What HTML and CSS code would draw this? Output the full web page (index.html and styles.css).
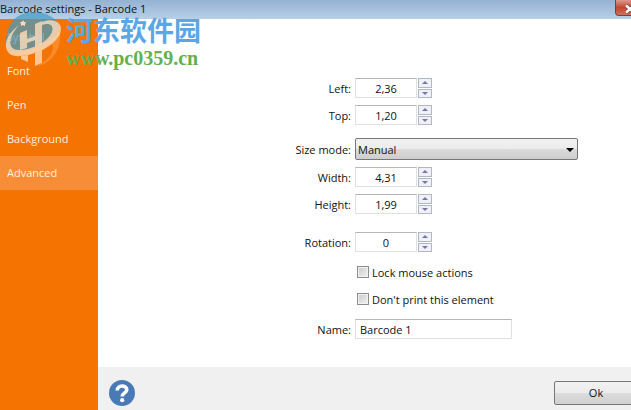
FILE: index.html
```html
<!DOCTYPE html>
<html lang="en">
<head>
    <meta charset="UTF-8">
    <meta name="viewport" content="width=device-width, initial-scale=1.0">
    <title>Barcode settings - Barcode 1</title>
    <link rel="stylesheet" href="styles.css">
</head>
<body>
    <header class="titlebar">
        <span>Barcode settings - Barcode 1</span>
        <button class="close-button" aria-label="Close">
            <svg width="12" height="10" viewBox="0 0 12 10">
                <path d="M2 1.5L10 8.5M10 1.5L2 8.5" stroke="#6b4a50" stroke-width="4"/>
                <path d="M2 1.5L10 8.5M10 1.5L2 8.5" stroke="#fff" stroke-width="2.4"/>
            </svg>
        </button>
    </header>

    <div class="window">
        <!-- Sections -->
        <nav class="sidebar">
            <a href="#symbol">Symbol</a>
            <a href="#font">Font</a>
            <a href="#pen">Pen</a>
            <a href="#background">Background</a>
            <a href="#advanced" class="active">Advanced</a>
        </nav>

        <main class="content">
            <form class="settings" id="settings">
                <div class="row">
                    <label for="left">Left:</label>
                    <div class="spinner">
                        <input type="text" id="left" value="2,36">
                        <div class="steps">
                            <button type="button" class="up" aria-label="Increase left"></button>
                            <button type="button" class="down" aria-label="Decrease left"></button>
                        </div>
                    </div>
                </div>
                <div class="row">
                    <label for="top">Top:</label>
                    <div class="spinner">
                        <input type="text" id="top" value="1,20">
                        <div class="steps">
                            <button type="button" class="up" aria-label="Increase top"></button>
                            <button type="button" class="down" aria-label="Decrease top"></button>
                        </div>
                    </div>
                </div>
                <div class="row row-select">
                    <label for="sizeMode">Size mode:</label>
                    <div class="select-box">
                        <select id="sizeMode">
                            <option>Manual</option>
                        </select>
                    </div>
                </div>
                <div class="row">
                    <label for="width">Width:</label>
                    <div class="spinner">
                        <input type="text" id="width" value="4,31">
                        <div class="steps">
                            <button type="button" class="up" aria-label="Increase width"></button>
                            <button type="button" class="down" aria-label="Decrease width"></button>
                        </div>
                    </div>
                </div>
                <div class="row">
                    <label for="height">Height:</label>
                    <div class="spinner">
                        <input type="text" id="height" value="1,99">
                        <div class="steps">
                            <button type="button" class="up" aria-label="Increase height"></button>
                            <button type="button" class="down" aria-label="Decrease height"></button>
                        </div>
                    </div>
                </div>
                <div class="row row-rotation">
                    <label for="rotation">Rotation:</label>
                    <div class="spinner">
                        <input type="text" id="rotation" value="0">
                        <div class="steps">
                            <button type="button" class="up" aria-label="Increase rotation"></button>
                            <button type="button" class="down" aria-label="Decrease rotation"></button>
                        </div>
                    </div>
                </div>
                <div class="row">
                    <label class="check"><input type="checkbox"> Lock mouse actions</label>
                </div>
                <div class="row">
                    <label class="check"><input type="checkbox"> Don't print this element</label>
                </div>
                <div class="row row-name">
                    <label for="name">Name:</label>
                    <input type="text" id="name" class="name" value="Barcode 1">
                </div>
            </form>

            <footer class="footer">
                <button class="help-button" aria-label="Help">
                    <svg width="26" height="26" viewBox="0 0 26 26">
                        <circle cx="13" cy="13" r="13" fill="#4a7ab5"/>
                        <path d="M8.3 10.4C8.3 4.6 17.8 4.8 17.8 9.8C17.8 13 13.2 12.8 13.2 16.4" fill="none" stroke="#fff" stroke-width="3.6"/>
                        <circle cx="13.2" cy="20.2" r="2.1" fill="#fff"/>
                    </svg>
                </button>
                <button type="submit" form="settings" class="ok-button">Ok</button>
            </footer>
        </main>
    </div>

    <!-- Site mark, lies over the window -->
    <div class="watermark">
        <svg width="57" height="56" viewBox="0 0 57 56">
            <path d="M1 32C0 12 12 0 28 0C42 0 51 6 55 15L48 28L28 38L8 40Z" fill="#3f9bc8" fill-opacity=".7"/>
            <path d="M4 40C20 42 40 34 55 20C57 36 47 52 32 54C48 46 50 36 46 30C34 42 18 46 4 40Z" fill="#fb9d45" fill-opacity=".6"/>
            <path d="M14 13C6 19 0 27 1 35C2 42 8 45 15 44C32 43 49 34 55 22C59 12 50 5 37 10L37 13C46 10 50 15 46 22C41 31 26 38 14 38C1 38 4 24 14 13Z" fill="#fddcbc" fill-opacity=".8"/>
            <path d="M15 21L22 18V27L30 24V12L37 9V32L30 35V28L22 31V36L15 38ZM16 44L23 43V50L16 47ZM30 41L37 38V51L30 54Z" fill="#fddcbc" fill-opacity=".8"/>
            <path d="M18 8L19 10L21 10L20 12L20 14L18 13L16 14L16 12L15 10L17 10Z" fill="#fddcbc"/>
        </svg>
        <div class="watermark-text">
            <div class="watermark-name">河东软件园</div>
            <div class="watermark-url">www.pc0359.cn</div>
        </div>
    </div>
</body>
</html>
```

FILE: styles.css
```css
* {
    box-sizing: border-box;
}
body {
    display: flex;
    flex-direction: column;
    height: 100vh;
    margin: 0;
    overflow: hidden;
    background-color: #fff;
    color: #111;
    font-family: "Open Sans", "Noto Sans", sans-serif;
    font-size: 11px;
}
button, input, select {
    font: inherit;
    color: inherit;
}
.titlebar {
    display: flex;
    justify-content: space-between;
    align-items: flex-start;
    height: 19px;
    line-height: 17px;
    background: linear-gradient(#94b2d3, #b8cfe7);
}
.close-button {
    width: 28px;
    height: 16px;
    margin-right: -12px;
    padding: 2px 0 0 8px;
    border: 1px solid #71414a;
    border-top: none;
    border-radius: 0 0 4px 4px;
    background: linear-gradient(#dc9a8d, #c34630 50%, #d1705a);
    line-height: 0;
    text-align: left;
}
.window {
    display: flex;
    flex: 1;
}
.sidebar {
    width: 98px;
    padding-top: 1px;
    background-color: #f57300;
}
.sidebar a {
    display: block;
    height: 34px;
    padding-left: 7px;
    color: #fff1df;
    line-height: 34px;
    text-decoration: none;
}
.sidebar .active {
    background-color: #f78e37;
}
.content {
    display: flex;
    flex: 1;
    flex-direction: column;
}
.settings {
    display: flex;
    flex: 1;
    flex-direction: column;
    gap: 7px;
    padding: 59px 53px 0 0;
}
.row {
    display: grid;
    grid-template-columns: 253px 1fr;
    column-gap: 4px;
    align-items: center;
    height: 20px;
}
.row > label {
    text-align: right;
}
.row-select {
    height: 22px;
    margin-top: 6px;
}
.row-rotation {
    margin-top: 11px;
    margin-bottom: 3px;
}
.row-name {
    margin-top: 3px;
}
.spinner {
    display: flex;
    gap: 1px;
}
.spinner input {
    width: 62px;
    height: 20px;
    padding: 0;
    border: 1px solid #dfe0e4;
    border-top-color: #b4b6bc;
    text-align: center;
}
.steps {
    display: flex;
    flex-direction: column;
    gap: 1px;
}
.steps button {
    display: flex;
    justify-content: center;
    align-items: center;
    width: 14px;
    flex: 1;
    padding: 0;
    border: 1px solid #b3b6c6;
    background-color: #f0f1f7;
}
.steps button::before {
    content: "";
    border: 3px solid transparent;
}
.steps .up::before {
    border-top: none;
    border-bottom-color: #7478a4;
}
.steps .down::before {
    border-bottom: none;
    border-top-color: #7478a4;
}
.select-box {
    position: relative;
}
/* drop-down arrow */
.select-box::after {
    content: "";
    position: absolute;
    top: 10px;
    right: 4px;
    border: 4px solid transparent;
    border-top-color: #000;
    border-bottom: none;
    pointer-events: none;
}
.select-box select {
    display: block;
    width: 100%;
    height: 22px;
    padding: 0 2px;
    appearance: none;
    border: 1px solid #777;
    border-radius: 2px;
    background: linear-gradient(#f2f2f2, #ebebeb 50%, #dadada 50%, #cecece);
}
.row .check {
    display: flex;
    grid-column: 2;
    align-items: center;
    gap: 3px;
    text-align: left;
}
.check input {
    width: 12px;
    height: 12px;
    margin: 0 0 0 2px;
    appearance: none;
    border: 1px solid #8c8c8c;
    background: linear-gradient(135deg, #c8c8c8, #f4f4f4);
    box-shadow: inset 0 0 0 1px #f2f2f2;
}
.name {
    width: 157px;
    height: 20px;
    padding: 0 4px;
    border: 1px solid #dfe0e4;
    border-top-color: #b4b6bc;
}
.footer {
    display: flex;
    justify-content: space-between;
    align-items: center;
    height: 43px;
    padding-top: 9px;
    padding-bottom: 1px;
    padding-left: 11px;
    background-color: #f0f0f0;
}
.help-button {
    padding: 0;
    border: none;
    background: none;
    line-height: 0;
}
.ok-button {
    width: 84px;
    height: 24px;
    margin-right: -7px;
    border: 1px solid #777;
    border-radius: 2px;
    background: linear-gradient(#f2f2f2, #ebebeb 50%, #dcdcdc 50%, #d0d0d0);
}
.watermark {
    display: flex;
    position: absolute;
    top: 12px;
    left: 5px;
    gap: 4px;
    pointer-events: none;
}
.watermark-name {
    color: #5ba7e5;
    font-family: "Noto Sans CJK SC", sans-serif;
    font-size: 27px;
    font-weight: bold;
    line-height: 35px;
}
.watermark-url {
    color: #63b04e;
    font-family: "Liberation Serif", serif;
    font-size: 20px;
    font-weight: bold;
    line-height: 22px;
}
```
